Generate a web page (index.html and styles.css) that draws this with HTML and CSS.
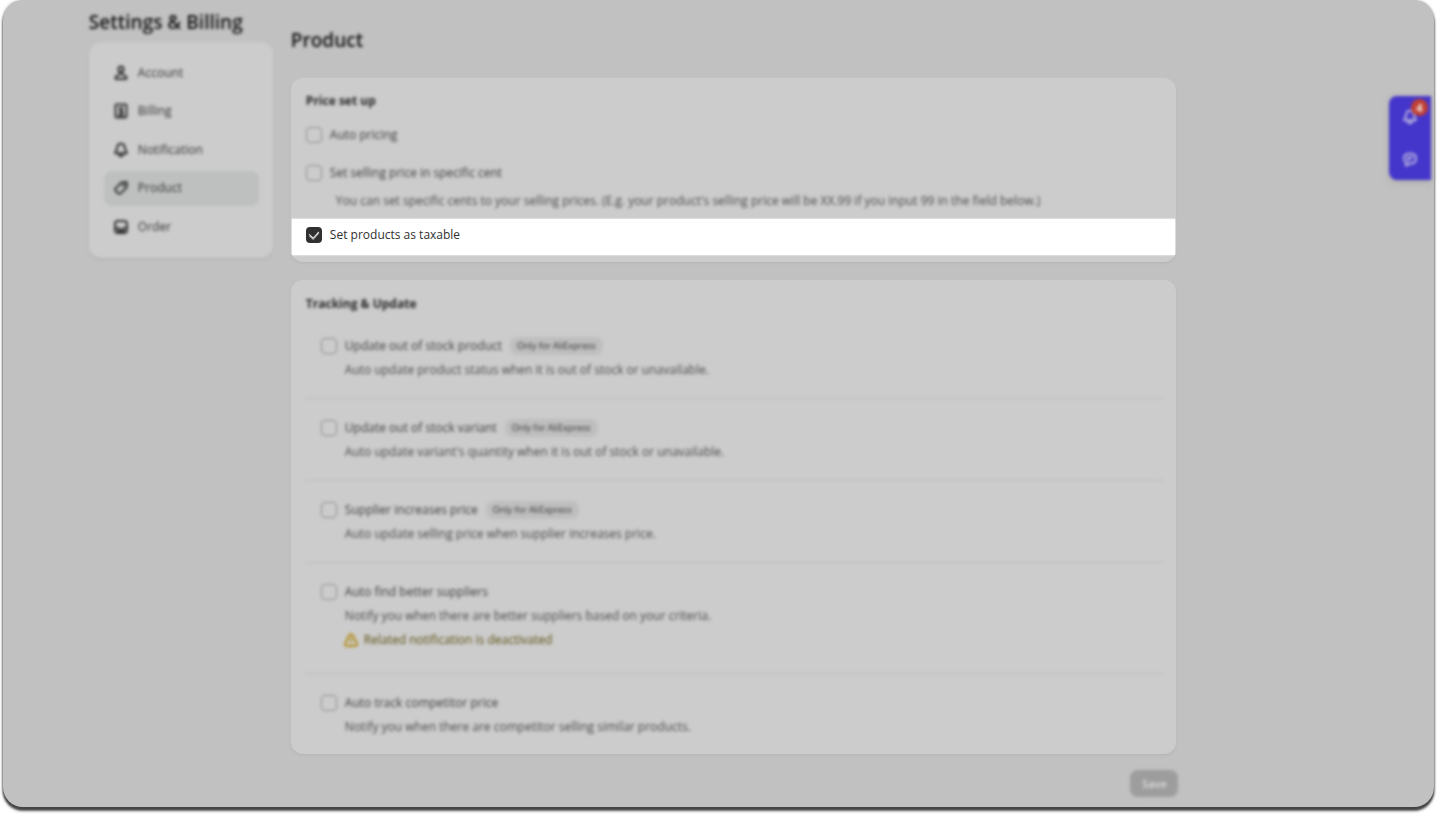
FILE: index.html
```html
<!DOCTYPE html>
<html lang="en">
  <head>
    <meta charset="UTF-8" />
    <meta name="viewport" content="width=device-width, initial-scale=1.0" />
    <title>Settings &amp; Billing</title>
    <link rel="stylesheet" href="styles.css">
  </head>
  <body>
    <div class="window">
      <aside class="sidebar">
        <h1 class="soft">Settings &amp; Billing</h1>
        <nav class="menu soft">
          <a href="#account">
            <svg viewBox="0 0 16 16"><circle cx="8" cy="4.2" r="2.600"/><path d="M6.800 7v2.200L2.600 11.800V14h10.800v-2.200L9.200 9.200V7"/></svg>
            Account
          </a>
          <a href="#billing">
            <svg viewBox="0 0 16 16"><rect x="2.500" y="1.500" width="11" height="13" rx="1"/><path d="M9.800 5.500C9.300 4.600 6.500 4.500 6.500 6.200s3.200 1 3.200 2.700-2.800 1.700-3.400.6M8 4v7M5 12.500h6"/></svg>
            Billing
          </a>
          <a href="#notification">
            <svg viewBox="0 0 16 16"><path d="M8 1.800C5.400 1.800 4.200 3.700 4.100 6.200 4 8.500 2.200 9.200 2.200 11.200h11.600c0-2-1.800-2.700-1.900-5C11.800 3.700 10.600 1.800 8 1.800zM6 12c0 3 4 3 4 0"/></svg>
            Notification
          </a>
          <a href="#product" class="active">
            <svg viewBox="0 0 16 16"><path d="M8.500 2.500 13 2c.6 0 1 .4 1 1l-.4 4.500-6 5.900c-.7.700-1.700.7-2.400 0l-2.600-2.600c-.7-.7-.7-1.700 0-2.400z"/><circle cx="10.800" cy="5.200" r=".6"/></svg>
            Product
          </a>
          <a href="#order">
            <svg viewBox="0 0 16 16"><rect x="2" y="2" width="12" height="12" rx="3"/><path d="M2 9h3.500l1 2h3l1-2H14M4 12.300h8"/></svg>
            Order
          </a>
        </nav>
      </aside>

      <main class="content">
        <h2 class="soft">Product</h2>

        <section class="card price">
          <h3 class="soft">Price set up</h3>
          <label class="check soft"><input type="checkbox" />Auto pricing</label>
          <label class="check soft"><input type="checkbox" />Set selling price in specific cent</label>
          <p class="hint soft">You can set specific cents to your selling prices. (E.g. your product's selling price will be XX.99 if you input 99 in the field below.)</p>
          <label class="check focus"><input type="checkbox" checked />Set products as taxable</label>
        </section>

        <section class="card tracking">
          <h3 class="soft">Tracking &amp; Update</h3>
          <div class="item soft">
            <label class="check"><input type="checkbox" />Update out of stock product <span class="tag">Only for AliExpress</span></label>
            <p>Auto update product status when it is out of stock or unavailable.</p>
          </div>
          <div class="item soft">
            <label class="check"><input type="checkbox" />Update out of stock variant <span class="tag">Only for AliExpress</span></label>
            <p>Auto update variant's quantity when it is out of stock or unavailable.</p>
          </div>
          <div class="item soft">
            <label class="check"><input type="checkbox" />Supplier increases price <span class="tag">Only for AliExpress</span></label>
            <p>Auto update selling price when supplier increases price.</p>
          </div>
          <div class="item soft">
            <label class="check"><input type="checkbox" />Auto find better suppliers</label>
            <p>Notify you when there are better suppliers based on your criteria.</p>
            <div class="warning">
              <svg viewBox="0 0 16 16"><path d="M8 2c.7 0 1.200.4 1.500 1l4.300 8.300c.6 1.200-.1 2.700-1.500 2.700H3.700c-1.400 0-2.100-1.500-1.500-2.700L6.500 3c.3-.6.8-1 1.500-1zM8 6v3.500M8 11v1"/></svg>
              Related notification is deactivated
            </div>
          </div>
          <div class="item soft">
            <label class="check"><input type="checkbox" />Auto track competitor price</label>
            <p>Notify you when there are competitor selling similar products.</p>
          </div>
        </section>

        <div class="actions soft">
          <button type="button">Save</button>
        </div>
      </main>

      <div class="dock soft">
        <button type="button" aria-label="Notifications">
          <svg viewBox="0 0 16 16"><path d="M8 1.800C5.400 1.800 4.200 3.700 4.100 6.200 4 8.500 2.200 9.200 2.200 11.200h11.600c0-2-1.800-2.700-1.900-5C11.800 3.700 10.600 1.800 8 1.800zM6 12c0 3 4 3 4 0"/></svg>
          <span class="badge">4</span>
        </button>
        <button type="button" aria-label="Chat">
          <svg viewBox="0 0 16 16"><path d="M8 2.500c4 0 6 2 6 5s-2 5-6 5L4 14.500v-3C2.700 10.500 2 9.300 2 7.500c0-3 2-5 6-5zM5 6.500h6M5 9h3"/></svg>
        </button>
      </div>
    </div>
  </body>
</html>
```

FILE: styles.css
```css
* {
  box-sizing: border-box;
}

body {
  margin: 0;
  padding: 0 3px 8px;
  background: #fff;
  color: #3c3c3c;
  font-family: "Open Sans", "Noto Sans", sans-serif;
  font-size: 12px;
  line-height: 24px;
}

h1,
h2,
h3,
p {
  margin: 0;
}

/* everything around the focused row */
.soft {
  filter: blur(1px) blur(1px);
}

.window {
  position: relative;
  display: flex;
  gap: 18px;
  min-height: calc(100vh - 8px);
  padding: 0 18% 10px 6%;
  border-radius: 20px;
  background: #c1c1c1;
  box-shadow: 0 3px 2px #444, 0 4px 3px #777, 0 0 3px #aaa;
}

.sidebar {
  flex: 0 0 184px;
  padding-top: 10px;
}

h1,
h2 {
  color: #111;
  font-size: 19px;
  font-weight: 600;
  line-height: 24px;
}

.menu {
  display: flex;
  flex-direction: column;
  justify-content: space-between;
  min-height: 216px;
  margin-top: 8px;
  padding: 13px 14px 14px 15px;
  border-radius: 12px;
  background: #ccc;
  box-shadow: 0 1px 2px #aaa;
}

.menu a {
  display: flex;
  align-items: center;
  gap: 9px;
  height: 35px;
  padding-left: 9px;
  border-radius: 8px;
  color: #333;
  text-decoration: none;
}

.menu a.active {
  background: #bec0c0;
}

svg {
  width: 16px;
  height: 16px;
  fill: none;
  stroke: currentColor;
  stroke-width: 2;
  stroke-linejoin: round;
}

.content {
  flex: 1;
  min-width: 0;
  padding-top: 28px;
}

.card {
  border-radius: 12px;
  background: #ccc;
  box-shadow: 0 1px 3px #b2b2b2, 0 0 2px #ccc;
}

.card h3 {
  color: #262626;
  font-size: 12px;
  font-weight: 700;
}

.price {
  margin-top: 26px;
  padding: 11px 0 7px;
}

.price h3 {
  padding: 0 15px;
}

.check {
  display: flex;
  align-items: center;
}

.check input {
  appearance: none;
  flex: none;
  width: 16px;
  height: 16px;
  margin: 0 8px 0 0;
  border: 1px solid #8e8e8e;
  border-radius: 4px;
}

.price .check {
  height: 32px;
  margin-top: 6px;
  padding: 0 15px;
}

.hint {
  padding-left: 45px;
  color: #4a4a4a;
}

.price .focus {
  height: 36px;
  margin: 6px 1px 0;
  padding: 0 14px 5px;
  background: #fff;
  box-shadow: 0 0 2px #fff;
  color: #303030;
}

.focus input {
  display: grid;
  place-items: center;
  border: 0;
  background: #303030;
}

.focus input::before {
  content: "";
  width: 5px;
  height: 8px;
  margin-bottom: 2px;
  border: solid #eee;
  border-width: 0 1px 1px 0;
  box-shadow: 1px 1px 0 #999;
  transform: rotate(42deg);
}

.tracking {
  margin-top: 18px;
  padding: 12px 13px 0 15px;
}

.item {
  padding: 17px 15px 16px;
  border-bottom: 1px solid #bbb;
}

.tracking h3 + .item {
  padding-top: 18px;
}

.item:last-child {
  padding-bottom: 15px;
  border-bottom: 0;
}

.item p {
  padding-left: 24px;
  color: #4a4a4a;
}

.tag {
  margin-left: 8px;
  padding: 0 7px;
  border-radius: 8px;
  background: #bebebe;
  color: #333;
  font-size: 9px;
  line-height: 18px;
}

.warning {
  display: flex;
  align-items: center;
  gap: 5px;
  padding: 0 0 5px 22px;
  color: #5a4e10;
}

.warning svg {
  color: #b38d1e;
}

.actions {
  display: flex;
  justify-content: flex-end;
  margin: 16px -2px 0 0;
}

.actions button {
  width: 48px;
  height: 27px;
  padding: 0;
  border: 0;
  border-radius: 8px;
  background: #9d9d9d;
  color: #ddd;
  font: 600 11px "Open Sans", sans-serif;
}

/* sticks to the right edge over the page */
.dock {
  position: absolute;
  top: 96px;
  right: 3px;
  width: 42px;
  border-radius: 8px 0 0 8px;
  background: #4435cb;
  box-shadow: 0 2px 6px #aaa;
}

.dock button {
  position: relative;
  display: grid;
  place-items: center;
  width: 42px;
  height: 42px;
  padding: 0;
  border: 0;
  background: none;
  color: #b8b3e0;
}

.badge {
  position: absolute;
  top: 3px;
  right: 3px;
  width: 17px;
  border-radius: 50%;
  background: #c23f30;
  color: #eee;
  font: 700 11px/17px "Open Sans", sans-serif;
}
```
